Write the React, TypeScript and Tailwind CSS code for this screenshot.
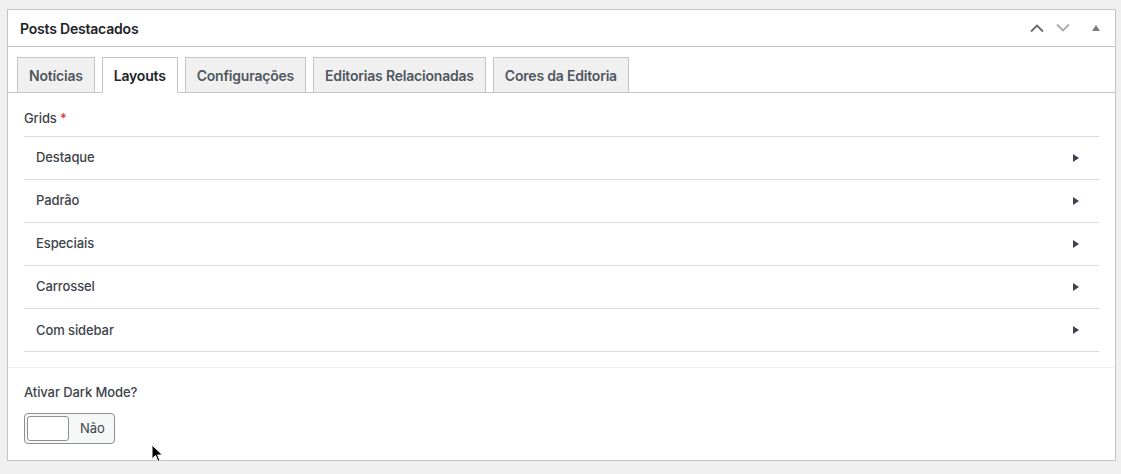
const tabs = ['Notícias', 'Layouts', 'Configurações', 'Editorias Relacionadas', 'Cores da Editoria'];
const grids = ['Destaque', 'Padrão', 'Especiais', 'Carrossel', 'Com sidebar'];

export default function App() {
  return (
    <div
      className="min-h-[474px] bg-[#f0f0f1] pt-[9px] pl-[7px] pr-[5px] relative"
      style={{ fontFamily: 'Inter, "Noto Sans", sans-serif' }}
    >
      <div className="border border-[#c3c4c7] bg-white">
        {/* header */}
        <div className="h-[37px] flex items-center justify-between border-b border-[#c3c4c7] pl-3 pr-[14px]">
          <h2 className="text-[14px] font-semibold text-[#1d2327] tracking-[-0.2px]">Posts Destacados</h2>
          <div className="flex items-center">
            <svg width="16" height="10" viewBox="0 0 16 10" className="mr-[10px]">
              <path d="M2 8.5 L8 2.5 L14 8.5" fill="none" stroke="#646970" strokeWidth="1.8" />
            </svg>
            <svg width="16" height="10" viewBox="0 0 16 10" className="mr-[20px]">
              <path d="M2 1.5 L8 7.5 L14 1.5" fill="none" stroke="#a7aaad" strokeWidth="1.8" />
            </svg>
            <svg width="10" height="8" viewBox="0 0 10 8">
              <path d="M1 7 L5 1 L9 7 Z" fill="#787c82" />
            </svg>
          </div>
        </div>

        {/* tabs */}
        <div className="flex items-end gap-[7px] pl-[9px] pt-[10px] border-b border-[#c3c4c7]">
          {tabs.map((t, i) => (
            <div
              key={t}
              className={
                i === 1
                  ? 'h-[36px] px-[11px] flex items-center border border-[#c3c4c7] border-b-0 bg-white text-[14px] font-semibold text-[#1d2327] -mb-px relative z-10 tracking-[-0.2px]'
                  : 'h-[35px] px-[11px] flex items-center border border-[#c3c4c7] border-b-0 bg-[#f0f0f1] text-[14px] font-semibold text-[#50575e] tracking-[-0.2px]'
              }
            >
              {t}
            </div>
          ))}
        </div>

        {/* grids */}
        <div className="px-4 pt-[16px] pb-[15px]">
          <div className="text-[13px] text-[#3c434a] font-medium mb-[7px] tracking-[-0.1px]">
            Grids <span className="text-[#d63638]">*</span>
          </div>
          <div className="border-t border-[#dcdcde]">
            {grids.map((g) => (
              <div
                key={g}
                className="h-[43.2px] flex items-center justify-between pl-3 pr-[20px] border-b border-[#dcdcde] text-[13px] text-[#3c434a] font-medium tracking-[-0.1px]"
              >
                <span>{g}</span>
                <svg width="6" height="8" viewBox="0 0 6 8">
                  <path d="M0 0 L6 4 L0 8 Z" fill="#3c434a" />
                </svg>
              </div>
            ))}
          </div>
        </div>

        {/* dark mode */}
        <div className="border-t border-[#f0f0f1] px-4 pt-[15px] pb-[16px]">
          <div className="text-[13px] text-[#3c434a] font-medium mb-[10px] tracking-[-0.1px]">Ativar Dark Mode?</div>
          <div className="w-[91px] h-[31px] border border-[#8c8f94] rounded-[4px] bg-[#f6f7f7] flex items-center pl-[2px]">
            <div className="w-[42px] h-[25px] bg-white border border-[#8c8f94] rounded-[3px]" />
            <span className="ml-[11px] text-[13px] text-[#3c434a] tracking-[-0.1px]">Não</span>
          </div>
        </div>
      </div>

      {/* cursor */}
      <svg width="14" height="20" viewBox="0 0 14 20" className="absolute left-[151px] top-[444px]">
        <path d="M1 1 L1 15 L4.5 11.5 L7 17.5 L9 16.6 L6.6 11 L11.5 11 Z" fill="#000" stroke="#fff" strokeWidth="1" />
      </svg>
    </div>
  );
}
